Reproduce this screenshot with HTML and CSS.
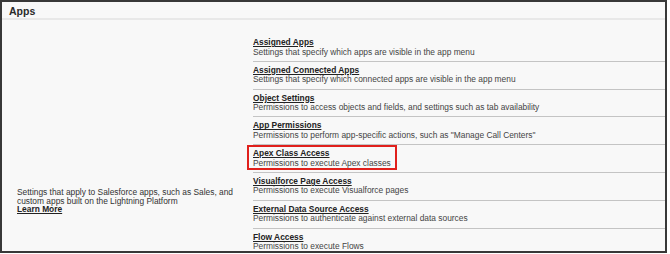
FILE: index.html
```html
<!DOCTYPE html>
<html>
<head>
    <title>Apps</title>
    <link rel="stylesheet" href="styles.css">
</head>
<body>
<div class="panel">
    <div class="panel-header">Apps</div>
    <div class="panel-body">
        <div class="intro">
            Settings that apply to Salesforce apps, such as Sales, and custom apps built on the Lightning Platform
            <a href="#" class="learn-more">Learn More</a>
        </div>
        <div class="item-list">
            <div class="item">
                <a href="#" class="item-title">Assigned Apps</a>
                <div class="item-desc">Settings that specify which apps are visible in the app menu</div>
            </div>
            <div class="item">
                <a href="#" class="item-title">Assigned Connected Apps</a>
                <div class="item-desc">Settings that specify which connected apps are visible in the app menu</div>
            </div>
            <div class="item">
                <a href="#" class="item-title">Object Settings</a>
                <div class="item-desc">Permissions to access objects and fields, and settings such as tab availability</div>
            </div>
            <div class="item">
                <a href="#" class="item-title">App Permissions</a>
                <div class="item-desc">Permissions to perform app-specific actions, such as "Manage Call Centers"</div>
            </div>
            <div class="item highlight">
                <a href="#" class="item-title">Apex Class Access</a>
                <div class="item-desc">Permissions to execute Apex classes</div>
            </div>
            <div class="item">
                <a href="#" class="item-title">Visualforce Page Access</a>
                <div class="item-desc">Permissions to execute Visualforce pages</div>
            </div>
            <div class="item">
                <a href="#" class="item-title">External Data Source Access</a>
                <div class="item-desc">Permissions to authenticate against external data sources</div>
            </div>
            <div class="item">
                <a href="#" class="item-title">Flow Access</a>
                <div class="item-desc">Permissions to execute Flows</div>
            </div>
        </div>
    </div>
</div>
</body>
</html>
```

FILE: styles.css
```css
body {
    margin: 0;
    background-color: white;
    font-family: "Liberation Sans", Arial, sans-serif;
    color: #333;
}
.panel {
    width: 667px;
    height: 253px;
    box-sizing: border-box;
    border: 2px solid #383838;
    background-color: #f8f8f8;
    overflow: hidden;
    display: flex;
    flex-direction: column;
}
.panel-header {
    height: 21px;
    padding-left: 7px;
    font-size: 10.5px;
    font-weight: bold;
    line-height: 13px;
    padding-top: 3px;
    box-sizing: border-box;
    color: #2a2a2a;
    border-bottom: 2px solid #e8e8e8;
}
.panel-body {
    display: flex;
    flex: 1;
    font-size: 8.4px;
}
.intro {
    width: 251px;
    box-sizing: border-box;
    padding: 168px 8px 0 15px;
    line-height: 8.5px;
}
.learn-more {
    display: block;
    font-weight: bold;
    color: #222;
}
.item-list {
    flex: 1;
    padding-top: 14px;
}
.item {
    position: relative;
    padding: 4px 0 3.8px;
    line-height: 9.5px;
    border-bottom: 1px solid #c4c4c4;
}
.item:last-child {
    border-bottom: none;
}
.item-title {
    font-weight: bold;
    color: #222;
}
.item-desc {
    color: #444;
}
.highlight::before {
    content: "";
    position: absolute;
    left: -6px;
    top: 0;
    width: 150px;
    height: 25px;
    box-sizing: border-box;
    border: 2px solid #e0201c;
}
```
